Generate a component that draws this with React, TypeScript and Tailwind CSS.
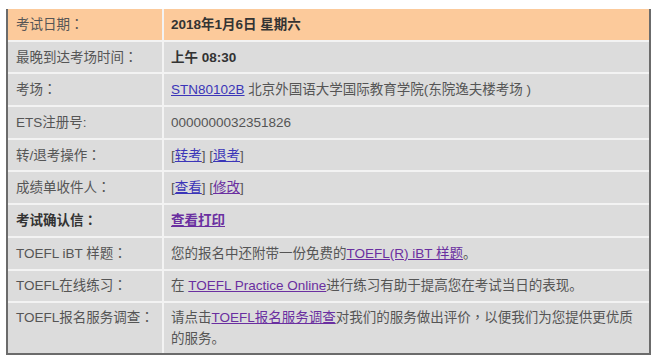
import React from "react";

const font = {
  fontFamily: '"Liberation Sans", "Noto Sans CJK SC", sans-serif',
};

const C = ({ ch = "：" }: { ch?: string }) => (
  <span className="[font-family:'Liberation_Sans','Noto_Sans_CJK_TC',sans-serif]">{ch}</span>
);

const L = ({ children, v }: { children: React.ReactNode; v?: boolean }) => (
  <a className={`underline ${v ? "text-[#6a2fa0]" : "text-[#3b35b8]"}`}>{children}</a>
);

type Row = {
  label: React.ReactNode;
  value: React.ReactNode;
  head?: boolean;
  boldLabel?: boolean;
  tall?: boolean;
};

const rows: Row[] = [
  {
    label: <>考试日期<C /></>,
    value: <span className="font-bold text-[#333]">2018年1月6日 星期六</span>,
    head: true,
  },
  {
    label: <>最晚到达考场时间<C /></>,
    value: <span className="font-bold text-[#333]">上午 08:30</span>,
  },
  {
    label: <>考场<C /></>,
    value: (
      <>
        <L>STN80102B</L> 北京外国语大学国际教育学院(东院逸夫楼考场 )
      </>
    ),
  },
  { label: "ETS注册号:", value: "0000000032351826" },
  {
    label: <>转/退考操作<C /></>,
    value: (
      <>
        [<L>转考</L>] [<L>退考</L>]
      </>
    ),
  },
  {
    label: <>成绩单收件人<C /></>,
    value: (
      <>
        [<L>查看</L>] [<L v>修改</L>]
      </>
    ),
  },
  {
    label: <>考试确认信<C /></>,
    boldLabel: true,
    value: <a className="underline font-bold text-[#6a2fa0]">查看打印</a>,
  },
  {
    label: <>TOEFL iBT 样题<C /></>,
    value: (
      <>
        您的报名中还附带一份免费的<L v>TOEFL(R) iBT 样题</L>。
      </>
    ),
  },
  {
    label: <>TOEFL在线练习<C /></>,
    value: (
      <>
        在 <L v>TOEFL Practice Online</L>进行练习有助于提高您在考试当日的表现。
      </>
    ),
  },
  {
    label: <>TOEFL报名服务调查<C /></>,
    tall: true,
    value: (
      <>
        请点击<L v>TOEFL报名服务调查</L>对我们的服务做出评价<C ch="，" />以便我们为您提供更优质的服务。
      </>
    ),
  },
];

export default function App() {
  return (
    <div className="w-[654px] h-[362px] bg-white pt-[9px] pl-[6px]" style={font}>
      <div className="w-[645px] border-x-2 border-b-2 border-[#6b6b6b] bg-[#f3f3f3]">
        <div className="grid grid-cols-[154px_485px] gap-[2px] text-[13.5px] leading-[21px] text-[#555]">
          {rows.map((r, i) => {
            const bg = r.head ? "bg-[#fcca9b]" : "bg-[#dcdcdc]";
            const h = r.tall ? "py-[4px] items-start" : "h-[30.7px] items-center";
            return (
              <React.Fragment key={i}>
                <div
                  className={`${bg} ${h} flex pl-[8px] whitespace-nowrap ${
                    r.boldLabel ? "font-bold text-[#333]" : ""
                  }`}
                >
                  <div>{r.label}</div>
                </div>
                <div className={`${bg} ${h} flex pl-[7px] pr-[8px]`}>
                  <div>{r.value}</div>
                </div>
              </React.Fragment>
            );
          })}
        </div>
      </div>
    </div>
  );
}
